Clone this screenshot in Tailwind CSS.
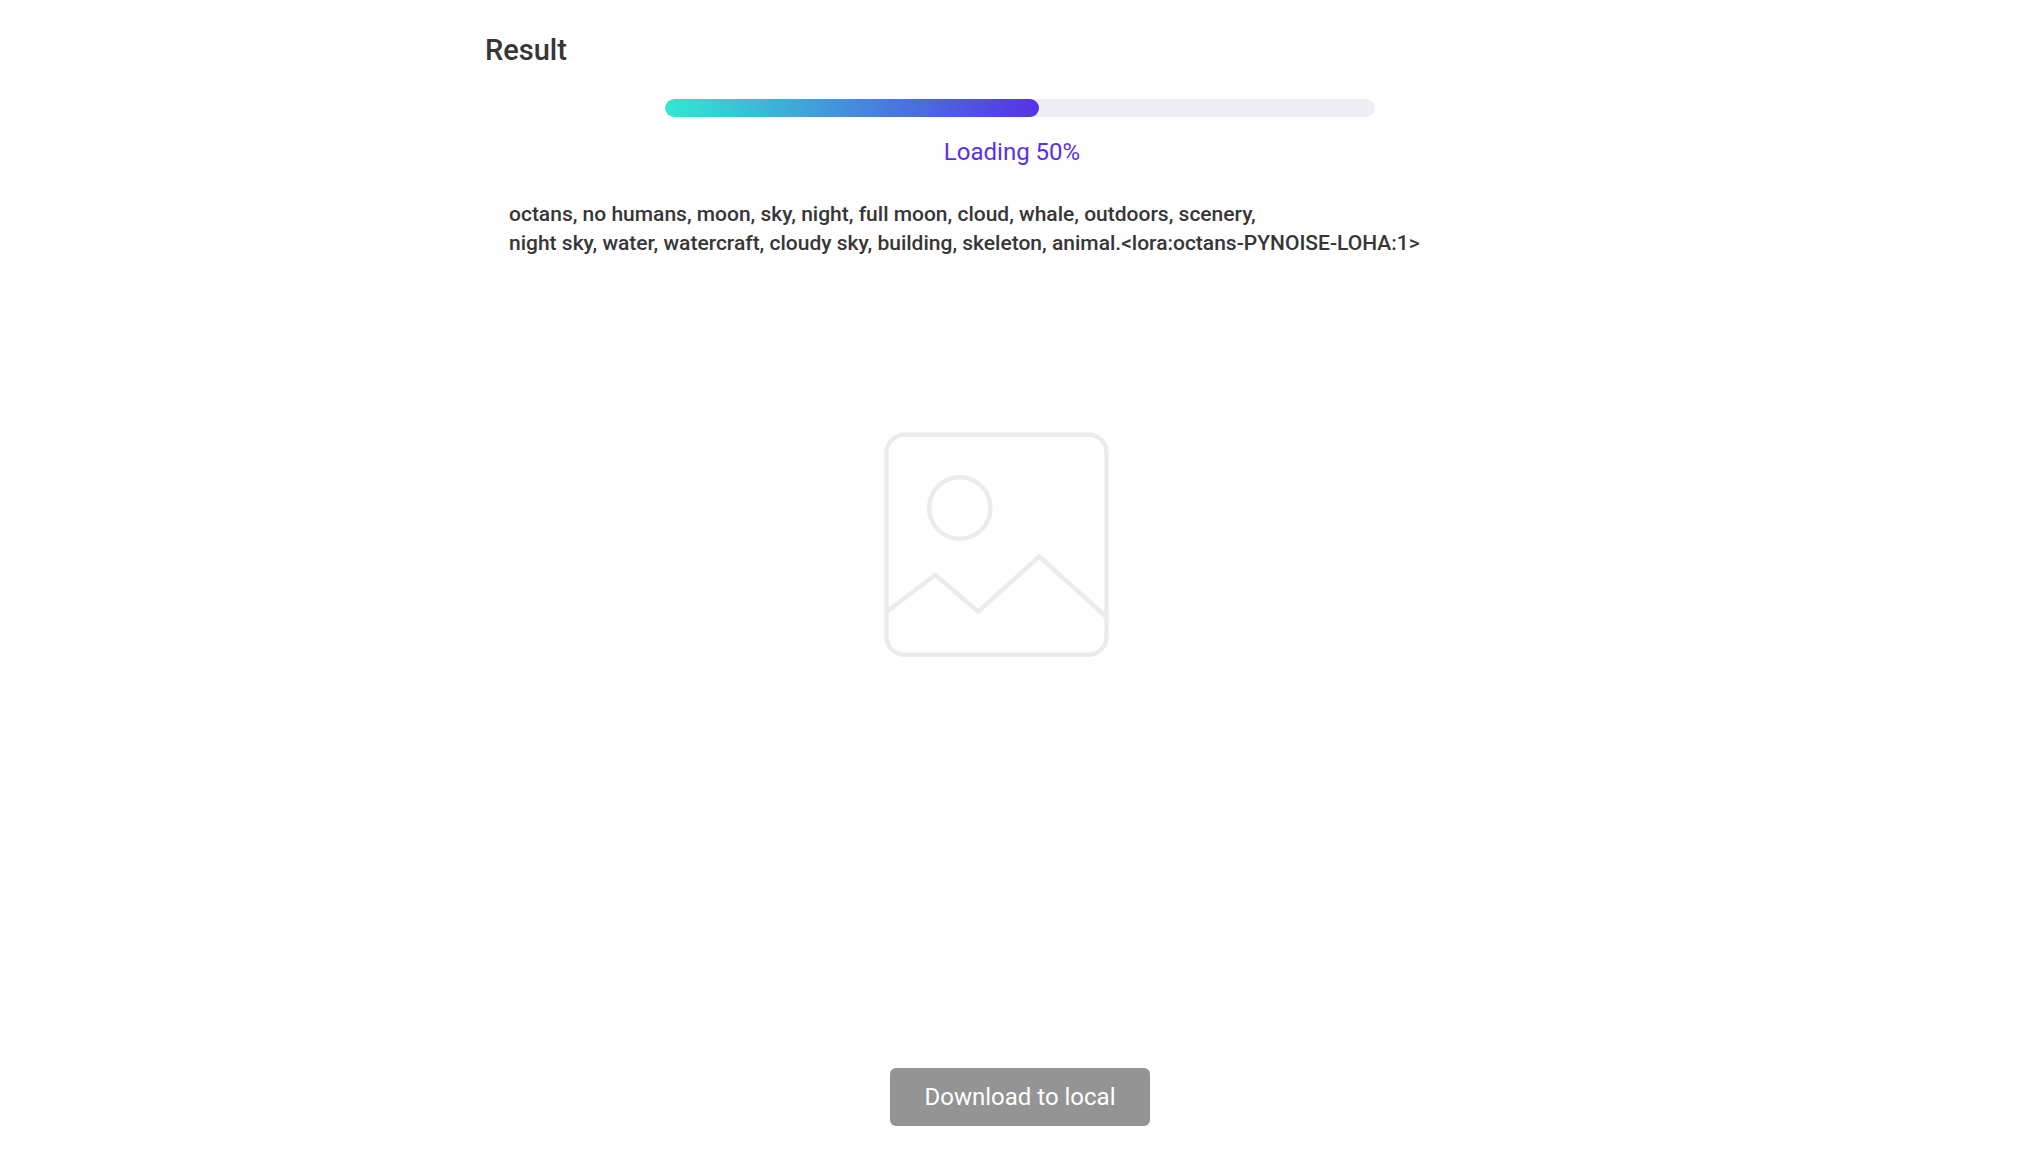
<!DOCTYPE html>
<html lang="en">
<head>
<meta charset="utf-8">
<meta name="viewport" content="width=device-width, initial-scale=1">
<title>Result</title>
<script src="https://cdn.jsdelivr.net/npm/@tailwindcss/browser@4"></script>
</head>
<body class="bg-[#fefefe] font-[Roboto,sans-serif] text-[#363636] antialiased">
<main class="mx-auto flex min-h-screen w-full max-w-[1070px] flex-col pt-8 pb-[50px]">
  <h1 class="text-[29px] leading-9 font-medium">Result</h1>

  <section class="mt-[31px] flex flex-col items-center" aria-label="Progress">
    <div class="h-[18px] w-full max-w-[710px] overflow-hidden rounded-full bg-[#eeedf4]" role="progressbar" aria-labelledby="status" aria-valuenow="50" aria-valuemin="0" aria-valuemax="100">
      <div class="h-full rounded-full bg-linear-to-r/srgb from-[#31e8d2] to-[#5731e8]" style="width:52.7%"></div>
    </div>
    <p id="status" class="mt-[19px] pr-4 text-2xl leading-8 text-[#5731e8]">Loading 50%</p>
  </section>

  <p class="mt-8 px-6 text-[21px] leading-[29px] font-medium">octans, no humans, moon, sky, night, full moon, cloud, whale, outdoors, scenery,<br>night sky, water, watercraft, cloudy sky, building, skeleton, animal.&lt;lora:octans-PYNOISE-LOHA:1&gt;</p>

  <div class="flex grow justify-center pt-[174px] pr-12 pb-16">
    <svg class="size-[225px]" viewBox="0 0 225 225" fill="none" stroke="#ebebeb" stroke-width="4.4" role="img" aria-label="Image placeholder">
      <rect x="2.5" y="2.7" width="220" height="220" rx="18"/>
      <circle cx="75.8" cy="76" r="30.7"/>
      <path stroke-linejoin="round" d="M3 179.5L51.3 143L94.2 179.5L155.3 124.5L222 184.5"/>
    </svg>
  </div>

  <button type="button" class="self-center rounded-md bg-[#949494] px-[34px] py-[13px] text-2xl leading-8 text-white">Download to local</button>
</main>
</body>
</html>
